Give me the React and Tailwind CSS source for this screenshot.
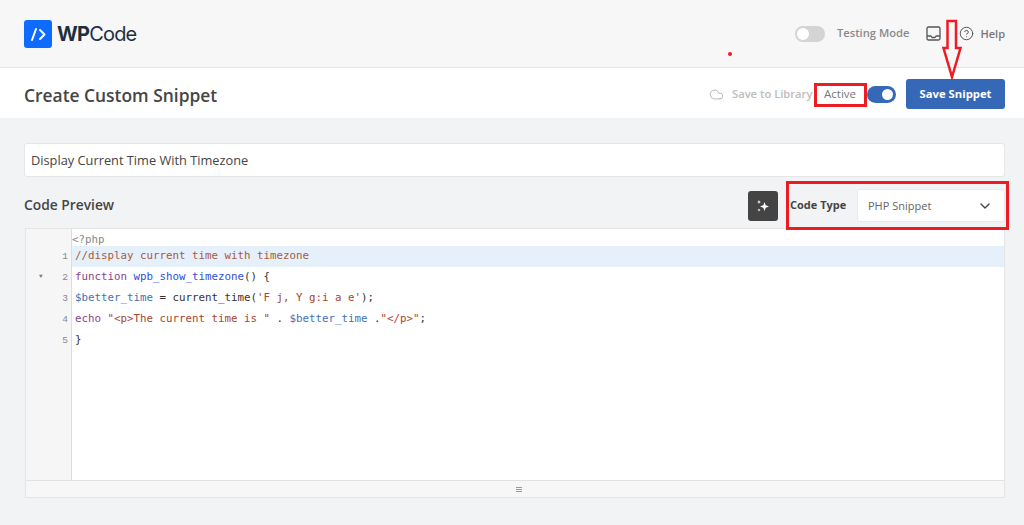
import React from "react";
import { ChevronDown, Cloud, CircleHelp } from "lucide-react";

const font = { fontFamily: '"Open Sans", sans-serif' };

const Logo = () => (
  <div className="flex items-center">
    <svg width="28" height="28" viewBox="0 0 28 28">
      <rect width="28" height="28" rx="3" fill="#0f6bff" />
      <path d="M12 9 L8 20" stroke="#fff" strokeWidth="2" strokeLinecap="round" fill="none" />
      <path d="M16 10 L20.5 14.5 L16 19" stroke="#fff" strokeWidth="2" strokeLinecap="round" strokeLinejoin="round" fill="none" />
    </svg>
    <span className="ml-[5px] text-[20px] leading-none text-[#1f2f3f] font-['Inter'] tracking-[-0.8px]">
      <span className="font-bold">WP</span>
      <span className="font-normal">Code</span>
    </span>
  </div>
);

const lines = [
  [["#a85b3b", "//display current time with timezone"]],
  [["#8a3f8f", "function "], ["#2f4fd8", "wpb_show_timezone"], ["#333", "() {"]],
  [["#3f72b5", "$better_time"], ["#333", " = current_time("], ["#a8452f", "'F j, Y g:i a e'"], ["#333", ");"]],
  [["#8a3f8f", "echo "], ["#a8452f", '"<p>The current time is "'], ["#333", " . "], ["#3f72b5", "$better_time"], ["#333", " ."], ["#a8452f", '"</p>"'], ["#333", ";"]],
  [["#333", "}"]],
];

const RedBox = ({ className }) => (
  <div className={`absolute border-[3px] border-[#ed1c24] ${className}`} />
);

export default function App() {
  return (
    <div className="relative w-[1024px] h-[525px] overflow-hidden bg-[#f2f3f5]" style={font}>
      {/* Top bar */}
      <div className="h-[68px] bg-[#f7f7f8] border-b border-[#e4e5e7] flex items-center justify-between pl-6 pr-[19px]">
        <Logo />
        <div className="flex items-center">
          <div className="w-[30px] h-[16px] rounded-full bg-[#d4d4d4] p-[2px]">
            <div className="w-3 h-3 rounded-full bg-white" />
          </div>
          <span className="ml-3 text-[11.2px] font-semibold text-[#8a8a8a]">Testing Mode</span>
          <svg className="ml-[17px]" width="15" height="15" viewBox="0 0 15 15" fill="none" stroke="#555" strokeWidth="1.3" strokeLinejoin="round">
            <rect x="1" y="1" width="13" height="13" rx="1.5" />
            <path d="M1 10 H5 L6 11.5 H9 L10 10 H14" />
          </svg>
          <CircleHelp className="ml-[18px] w-[15px] h-[15px] text-[#555]" strokeWidth={1.6} />
          <span className="ml-[6px] pt-[2px] text-[11px] font-semibold text-[#777]">Help</span>
        </div>
      </div>

      {/* Title bar */}
      <div className="h-[50px] bg-white flex items-center justify-between pl-6 pr-[19px]">
        <h1 className="pt-[5px] text-[17.4px] font-semibold text-[#454545]">Create Custom Snippet</h1>
        <div className="pt-[2px] flex items-center">
          <Cloud className="w-[15px] h-[15px] text-[#b5b5b5]" strokeWidth={1.5} />
          <span className="ml-[8px] w-[86px] text-[11.2px] font-semibold text-[#bdbdbd]">Save to Library</span>
          <span className="ml-[6px] w-[43px] text-[11.5px] text-[#777]">Active</span>
          <div className="w-[29px] h-[17px] rounded-full bg-[#3568b7] flex justify-end p-[3px]">
            <div className="w-[11px] h-[11px] rounded-full bg-white" />
          </div>
          <button className="ml-[10px] w-[99px] h-[30px] rounded-[3px] bg-[#3568b7] text-white text-[11.3px] font-bold">
            Save Snippet
          </button>
        </div>
      </div>

      {/* Body */}
      <div className="px-6 pt-[25px] pr-[19px]">
        <div className="h-[34px] bg-white border border-[#e5e6e8] rounded-[3px] flex items-center pl-[6px] pt-[2px] text-[12.8px] text-[#444]">
          Display Current Time With Timezone
        </div>

        <div className="h-[51px] pt-[6px] flex items-center justify-between">
          <span className="text-[13.8px] font-semibold text-[#454545]">Code Preview</span>
          <div className="flex items-center">
            <button className="w-[30px] h-[30px] rounded-[3px] bg-[#444] flex items-center justify-center">
              <svg width="16" height="16" viewBox="0 0 16 16" fill="#fff">
                <path d="M9.5 4 L10.7 7.3 L14 8.5 L10.7 9.7 L9.5 13 L8.3 9.7 L5 8.5 L8.3 7.3 Z" />
                <path d="M4 2 L4.6 3.4 L6 4 L4.6 4.6 L4 6 L3.4 4.6 L2 4 L3.4 3.4 Z" />
                <path d="M4 10.5 L4.5 11.5 L5.5 12 L4.5 12.5 L4 13.5 L3.5 12.5 L2.5 12 L3.5 11.5 Z" />
              </svg>
            </button>
            <span className="ml-3 w-[56px] whitespace-nowrap text-[11px] font-bold text-[#454545]">Code Type</span>
            <div className="ml-[11px] w-[148px] h-[33px] bg-white border border-[#e8e9eb] rounded-[3px] flex items-center justify-between pl-[10px] pr-[11px] text-[11px] text-[#666]">
              <span className="pt-px">PHP Snippet</span>
              <ChevronDown className="w-4 h-4 text-[#444]" strokeWidth={2} />
            </div>
          </div>
        </div>

        {/* Editor */}
        <div className="ml-px h-[270px] border border-[#e4e5e7] flex flex-col bg-white">
          <div className="flex-1 flex min-h-0">
            <div className="w-[46px] bg-[#f6f6f6] border-r border-[#dddddd] pt-[20px] text-[9.5px] text-[#888] font-['Liberation_Mono']">
              {lines.map((_, i) => (
                <div key={i} className="relative h-[21px] leading-[15px] text-right pr-[3px]">
                  {i === 1 && <span className="absolute left-[13px] top-[3px] text-[6px] leading-[8px] text-[#777]">▼</span>}
                  {i + 1}
                </div>
              ))}
            </div>
            <div className="flex-1 text-[10.8px] font-['DejaVu_Sans_Mono']">
              <div className="h-[17px] leading-[21px] text-[#888]">&lt;?php</div>
              {lines.map((parts, i) => (
                <div key={i} className={`h-[21px] leading-[20px] pl-[3px] whitespace-pre ${i === 0 ? "bg-[#e6f0fb]" : ""}`}>
                  {parts.map(([color, text], j) => (
                    <span key={j} style={{ color }}>{text}</span>
                  ))}
                </div>
              ))}
            </div>
          </div>
          <div className="h-[17px] pl-2 bg-[#f7f7f7] border-t border-[#e2e2e2] flex flex-col items-center justify-center gap-px">
            <div className="w-[6px] h-px bg-[#999]" />
            <div className="w-[6px] h-px bg-[#999]" />
            <div className="w-[6px] h-px bg-[#999]" />
          </div>
        </div>
      </div>

      {/* Red annotations drawn over the screenshot */}
      <RedBox className="left-[814px] top-[83px] w-[53px] h-[24px]" />
      <RedBox className="left-[786px] top-[181px] w-[223px] h-[49px]" />
      <div className="absolute left-[728px] top-[52px] w-1 h-1 rounded-full bg-[#ed1c24]" />
      <svg className="absolute left-[940px] top-[18px]" width="24" height="62" viewBox="0 0 24 62">
        <path d="M7.5 3 H16 V30 H20.5 L12 59 L3.5 30 H7.5 Z" fill="none" stroke="#ed1c24" strokeWidth="2.5" />
      </svg>
    </div>
  );
}
